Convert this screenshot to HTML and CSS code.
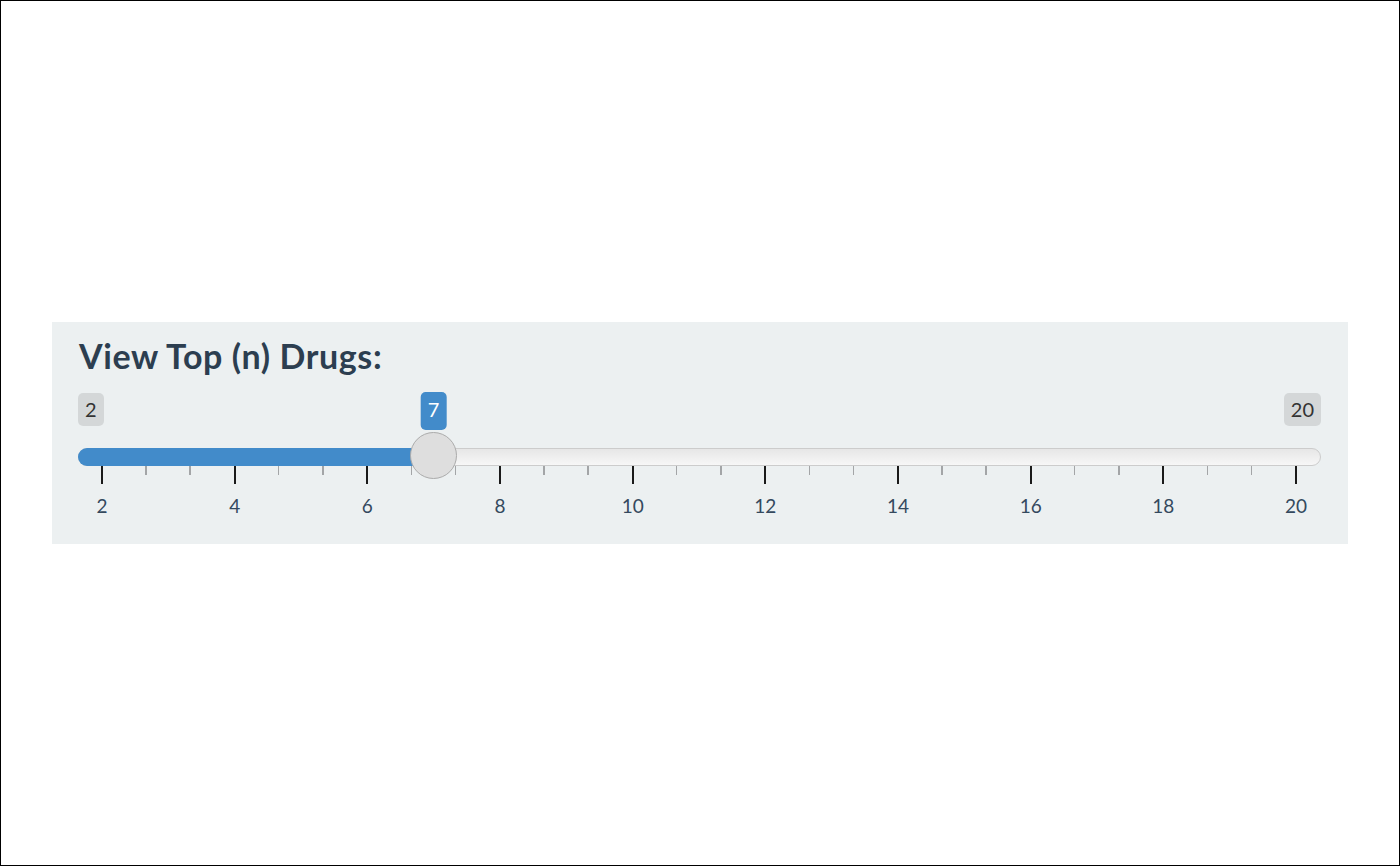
FILE: index.html
```html
<!DOCTYPE html>
<html>
<head>
<meta charset="utf-8">
<link rel="stylesheet" href="styles.css">
</head>
<body>
<div class="frame">
  <div class="panel">
    <label class="title">View Top (n) Drugs:</label>
    <div class="slider">
      <span class="lbl lbl-min">2</span>
      <span class="lbl lbl-max">20</span>
      <div class="track"></div>
      <div class="scale">
        <div class="bar" style="width: 27.778%"></div>
        <span class="lbl-single" style="left: 27.778%">7</span>
        <div class="handle" style="left: 27.778%"></div>
        <div class="grid">
          <span class="tick major" style="left: 0%"></span>
          <span class="tick minor" style="left: 3.704%"></span>
          <span class="tick minor" style="left: 7.407%"></span>
          <span class="tick major" style="left: 11.111%"></span>
          <span class="tick minor" style="left: 14.815%"></span>
          <span class="tick minor" style="left: 18.519%"></span>
          <span class="tick major" style="left: 22.222%"></span>
          <span class="tick minor" style="left: 25.926%"></span>
          <span class="tick minor" style="left: 29.630%"></span>
          <span class="tick major" style="left: 33.333%"></span>
          <span class="tick minor" style="left: 37.037%"></span>
          <span class="tick minor" style="left: 40.741%"></span>
          <span class="tick major" style="left: 44.444%"></span>
          <span class="tick minor" style="left: 48.148%"></span>
          <span class="tick minor" style="left: 51.852%"></span>
          <span class="tick major" style="left: 55.556%"></span>
          <span class="tick minor" style="left: 59.259%"></span>
          <span class="tick minor" style="left: 62.963%"></span>
          <span class="tick major" style="left: 66.667%"></span>
          <span class="tick minor" style="left: 70.370%"></span>
          <span class="tick minor" style="left: 74.074%"></span>
          <span class="tick major" style="left: 77.778%"></span>
          <span class="tick minor" style="left: 81.481%"></span>
          <span class="tick minor" style="left: 85.185%"></span>
          <span class="tick major" style="left: 88.889%"></span>
          <span class="tick minor" style="left: 92.593%"></span>
          <span class="tick minor" style="left: 96.296%"></span>
          <span class="tick major" style="left: 100%"></span>
          <span class="gtext" style="left: 0%">2</span>
          <span class="gtext" style="left: 11.111%">4</span>
          <span class="gtext" style="left: 22.222%">6</span>
          <span class="gtext" style="left: 33.333%">8</span>
          <span class="gtext" style="left: 44.444%">10</span>
          <span class="gtext" style="left: 55.556%">12</span>
          <span class="gtext" style="left: 66.667%">14</span>
          <span class="gtext" style="left: 77.778%">16</span>
          <span class="gtext" style="left: 88.889%">18</span>
          <span class="gtext" style="left: 100%">20</span>
        </div>
      </div>
    </div>
  </div>
</div>
</body>
</html>
```
FILE: styles.css
```css
* { box-sizing: border-box; }
html, body { margin: 0; padding: 0; background: #fff; }
.frame {
  width: 1400px;
  height: 866px;
  border: 1px solid #000;
  padding: 321px 0 0 51px;
  font-family: Lato, "Open Sans", sans-serif;
}
.panel {
  width: 1296px;
  height: 222px;
  background: #ecf0f1;
  padding: 14px 27px 0 26px;
}
.title {
  display: block;
  font-weight: 700;
  font-size: 34px;
  letter-spacing: 0.6px;
  line-height: 40px;
  color: #2c3e50;
  margin-left: 1px;
}
.slider {
  position: relative;
  height: 130px;
  margin-top: 14px;
}
.lbl {
  position: absolute;
  top: 3px;
  height: 33px;
  line-height: 33px;
  padding: 0 7px;
  font-size: 20px;
  color: #333;
  background: rgba(0,0,0,0.1);
  border-radius: 5px;
}
.lbl-min { left: 0; }
.lbl-max { right: 0; }
.track {
  position: absolute;
  left: 0;
  right: 0;
  top: 58px;
  height: 18px;
  border: 1px solid #ccc;
  border-radius: 9px;
  background: linear-gradient(to bottom, #dedede -50%, #fff 150%);
}
.scale {
  position: absolute;
  left: 24px;
  right: 25px;
  top: 0;
  bottom: 0;
}
.bar {
  position: absolute;
  left: -24px;
  top: 58px;
  height: 18px;
  background: #428bca;
  border-radius: 9px 0 0 9px;
  padding-left: 24px;
  box-sizing: content-box;
}
.lbl-single {
  position: absolute;
  top: 2px;
  height: 38px;
  line-height: 34px;
  padding: 0 7.5px;
  transform: translateX(-50%);
  font-size: 20px;
  color: #fff;
  background: #428bca;
  border-radius: 5px;
}
.handle {
  position: absolute;
  top: 42px;
  width: 47px;
  height: 47px;
  margin-left: -23.5px;
  border: 1px solid #ababab;
  border-radius: 50%;
  background: #dedede;
}
.grid {
  position: absolute;
  left: 0;
  right: 0;
  top: 76px;
  height: 50px;
}
.tick {
  position: absolute;
  top: 0;
  width: 2px;
  margin-left: -1px;
}
.tick.major { height: 18px; background: #1a1a1a; }
.tick.minor { height: 9px; background: #a3a5a7; width: 1.5px; }
.gtext {
  position: absolute;
  top: 28px;
  transform: translateX(-50%);
  font-size: 19px;
  line-height: 24px;
  color: #34495e;
}
```
